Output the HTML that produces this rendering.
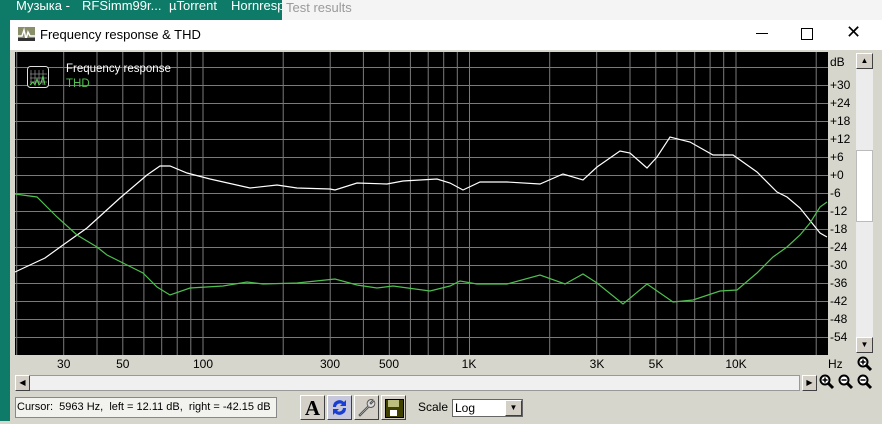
<!DOCTYPE html>
<html><head><meta charset="utf-8"><style>
body{margin:0;width:882px;height:421px;overflow:hidden;position:relative;background:#d6d6cc;font-family:"Liberation Sans",sans-serif}
.a{position:absolute}
.tb{color:#fff;font-size:13px;top:-2px}
.btn{position:absolute;background:#d4d0c8;border:1px solid;border-color:#fff #404040 #404040 #fff;box-sizing:border-box}
</style></head><body>
<div class="a" style="left:0;top:0;width:882px;height:20px;background:#0e7a68"></div>
<div class="a" style="left:0;top:20px;width:10px;height:401px;background:#0e7a68"></div>
<div class="a tb" style="left:16px">Музыка -</div>
<div class="a tb" style="left:82px">RFSimm99r...</div>
<div class="a tb" style="left:169px">µTorrent</div>
<div class="a tb" style="left:231px">Hornresp</div>
<div class="a" style="left:282px;top:0;width:600px;height:20px;background:#f4f4f4;color:#9a9a9a;font-size:13px;line-height:16px;padding-left:4px">Test results</div>
<div class="a" style="left:10px;top:20px;width:872px;height:30px;background:#fff"></div>
<svg class="a" style="left:18px;top:27px" width="17" height="14"><rect width="17" height="14" fill="#8a8f6a"/><polyline points="0,9 4,9 6,3 8,12 10,5 12,9 17,9" fill="none" stroke="#fff" stroke-width="1.5"/><rect y="11" width="17" height="3" fill="#333"/></svg>
<div class="a" style="left:40px;top:27px;font-size:13px;color:#000">Frequency response &amp; THD</div>
<div class="a" style="left:756px;top:33px;width:12px;height:1px;background:#000"></div>
<div class="a" style="left:801px;top:28px;width:10px;height:10px;border:1px solid #000"></div>
<div class="a" style="left:846px;top:22px;font-size:18px;color:#000">✕</div>
<svg class="a" style="left:0;top:0" width="882" height="421">
<rect x="15" y="52" width="813" height="303" fill="#000"/>
<g stroke="#7a7a7a" stroke-width="1">
<path d="M16.7 52V355M63.7 52V355M97 52V355M122.8 52V355M143.9 52V355M161.7 52V355M177.2 52V355M190.8 52V355M203 52V355M283.2 52V355M330.2 52V355M363.4 52V355M389.3 52V355M410.4 52V355M428.2 52V355M443.7 52V355M457.3 52V355M469.5 52V355M549.7 52V355M596.7 52V355M630 52V355M655.8 52V355M676.9 52V355M694.7 52V355M710.1 52V355M723.7 52V355M736 52V355M816.2 52V355"/>
<path d="M15 67.5H828M15 85.5H828M15 103.5H828M15 121.5H828M15 139.5H828M15 157.5H828M15 175.5H828M15 193.5H828M15 211.5H828M15 229.5H828M15 247.5H828M15 265.5H828M15 283.5H828M15 301.5H828M15 319.5H828M15 337.5H828"/>
</g>
<polyline fill="none" stroke="#fff" stroke-width="1.2" points="15,272 45,258 63,245 87,228 120,198 147,175 160,166 170,166 187,173 210,179 250,188 277,185 297,188 330,189 335,190 357,183 387,184 403,181 437,179 450,183 463,190 480,182 507,182 540,184 563,174 583,180 597,167 620,151 630,153 647,168 657,157 670,137 690,142 713,155 733,155 757,172 777,192 787,197 800,208 820,233 827,237"/>
<polyline fill="none" stroke="#4fbf4f" stroke-width="1.2" points="15,194 37,197 57,217 77,235 97,247 107,255 123,263 143,273 157,287 170,295 190,288 223,286 247,282 263,284 297,283 335,279 357,285 377,288 393,286 430,291 450,286 460,281 477,284 507,284 540,275 565,284 583,274 597,283 623,304 647,284 673,302 693,300 720,291 737,290 757,273 773,257 787,247 800,235 810,223 820,207 827,202"/>
<rect x="27.5" y="66.5" width="21" height="21" rx="3" fill="#000" stroke="#ddd"/>
<path d="M31 70V85M35 70V85M39 70V85M43 70V85M30 74H47M30 78H47M30 82H47" stroke="#888" stroke-width="0.8"/>
<path d="M30 85L33 82L35 85L37 79L39 85L41 83L43 76L45 85" stroke="#5c5" fill="none"/>
<g font-size="12" fill="#000">
<text x="830" y="66">dB</text>
<text x="830" y="89">+30</text><text x="830" y="107">+24</text><text x="830" y="125">+18</text><text x="830" y="143">+12</text><text x="830" y="161">+6</text><text x="830" y="179">+0</text><text x="830" y="197">-6</text><text x="830" y="215">-12</text><text x="830" y="233">-18</text><text x="830" y="251">-24</text><text x="830" y="269">-30</text><text x="830" y="287">-36</text><text x="830" y="305">-42</text><text x="830" y="323">-48</text><text x="830" y="341">-54</text>
<g text-anchor="middle"><text x="63.7" y="368">30</text><text x="122.8" y="368">50</text><text x="203" y="368">100</text><text x="330" y="368">300</text><text x="389" y="368">500</text><text x="469" y="368">1K</text><text x="597" y="368">3K</text><text x="656" y="368">5K</text><text x="736" y="368">10K</text></g>
<text x="828" y="368">Hz</text>
</g>
<text x="66" y="72" font-size="11.5" fill="#fff">Frequency response</text>
<text x="66" y="87" font-size="11.5" fill="#4fbf4f">THD</text>
</svg>
<div class="a" style="left:856px;top:53px;width:17px;height:300px;background:#ececec"></div>
<div class="btn" style="left:856px;top:53px;width:17px;height:16px;font-size:8px;text-align:center;line-height:14px">▲</div>
<div class="a" style="left:856px;top:150px;width:17px;height:72px;background:#fff;border:1px solid #bbb;box-sizing:border-box"></div>
<div class="btn" style="left:856px;top:337px;width:17px;height:16px;font-size:8px;text-align:center;line-height:14px">▼</div>
<div class="a" style="left:15px;top:375px;width:785px;height:16px;background:#f0f0f0;border:1px solid #999;box-sizing:border-box"></div>
<div class="btn" style="left:15px;top:375px;width:15px;height:16px;font-size:8px;line-height:14px;text-align:center">◀</div>
<div class="btn" style="left:802px;top:375px;width:15px;height:16px;font-size:8px;line-height:14px;text-align:center">▶</div>
<svg class="a" style="left:0;top:0" width="882" height="421">
<defs><g id="mg"><circle cx="6" cy="6" r="4.5" fill="#fff" stroke="#000" stroke-width="2"/><path d="M9.5 9.5L14 14" stroke="#000" stroke-width="3"/></g></defs>
<g transform="translate(857,356)"><use href="#mg"/><path d="M3.5 6H8.5M6 3.5V8.5" stroke="#000" stroke-width="1.5"/></g>
<g transform="translate(819,374)"><use href="#mg"/><path d="M3.5 6H8.5M6 3.5V8.5" stroke="#000" stroke-width="1.5"/></g>
<g transform="translate(838,374)"><use href="#mg"/><path d="M3.5 6H8.5" stroke="#000" stroke-width="1.5"/></g>
<g transform="translate(857,374)"><use href="#mg"/><path d="M3.5 6H8.5" stroke="#000" stroke-width="1.5"/></g>
</svg>
<div class="a" style="left:15px;top:397px;width:262px;height:21px;background:#f2f2ee;border:1px solid #888;box-sizing:border-box;font-size:11px;line-height:19px;padding-left:1px;white-space:nowrap;overflow:hidden">Cursor:&nbsp; 5963 Hz,&nbsp; left = 12.11 dB,&nbsp; right = -42.15 dB</div>
<div class="btn" style="left:300px;top:395px;width:25px;height:25px;font-family:'Liberation Serif';font-weight:bold;font-size:21px;text-align:center;line-height:24px">A</div>
<div class="btn" style="left:327px;top:395px;width:25px;height:25px;background:#c8c8dc"><svg width="23" height="23"><path d="M5 11A6.5 6.5 0 0 1 16 6L18 4V10H12L14 8A4 4 0 0 0 8 11Z" fill="#1a3fd0"/><path d="M18 12A6.5 6.5 0 0 1 7 17L5 19V13H11L9 15A4 4 0 0 0 15 12Z" fill="#1a3fd0"/></svg></div>
<div class="btn" style="left:354px;top:395px;width:25px;height:25px"><svg width="23" height="23"><path d="M4 19L13 10A4 4 0 0 1 18 4L15 7L16 8L19 5A4 4 0 0 1 14 11L5 20Z" fill="#ddd" stroke="#555"/></svg></div>
<div class="btn" style="left:381px;top:395px;width:25px;height:25px"><div class="a" style="left:3px;top:3px;width:17px;height:17px;background:#404000;border:1px solid #000"></div><div class="a" style="left:6px;top:4px;width:11px;height:7px;background:#bdbd80"></div><div class="a" style="left:8px;top:14px;width:7px;height:6px;background:#fff"></div></div>
<div class="a" style="left:418px;top:400px;font-size:12px">Scale</div>
<div class="a" style="left:452px;top:399px;width:71px;height:18px;background:#fff;border:1px solid #666;box-sizing:border-box;font-size:12px;line-height:16px;padding-left:2px">Log</div>
<div class="btn" style="left:505px;top:400px;width:17px;height:16px;font-size:8px;text-align:center;line-height:14px">▼</div>
</body></html>
